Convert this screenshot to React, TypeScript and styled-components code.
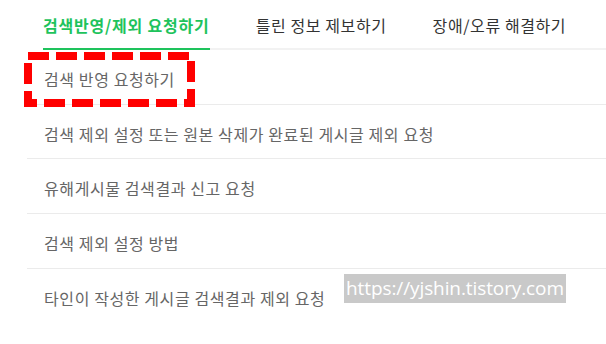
import styled, { createGlobalStyle } from "styled-components";

const GlobalStyle = createGlobalStyle`
  html, body {
    margin: 0;
    padding: 0;
    background: #fff;
  }
  body {
    font-family: "Noto Sans CJK KR", "Noto Sans", sans-serif;
  }
`;

const Page = styled.div`
  position: relative;
  width: 606px;
  height: 344px;
  overflow: hidden;
`;

const TabBar = styled.div`
  display: flex;
  gap: 46px;
  margin-left: 43px;
  height: 50px;
  box-sizing: border-box;
  border-bottom: 2px solid #f2f2f2;
`;

const Tab = styled.div<{ active?: boolean }>`
  display: flex;
  align-items: center;
  height: 50px;
  box-sizing: border-box;
  padding-top: 2px;
  margin-bottom: -2px;
  font-size: 16px;
  letter-spacing: ${p => (p.active ? 0.8 : 0.6)}px;
  font-weight: ${p => (p.active ? 700 : 400)};
  color: ${p => (p.active ? "#1ec35c" : "#333")};
  border-bottom: 2px solid ${p => (p.active ? "#1ec35c" : "transparent")};
  white-space: nowrap;
`;

const List = styled.ul`
  list-style: none;
  margin: 0 0 0 27px;
  padding: 0;
`;

const Row = styled.li`
  display: flex;
  align-items: center;
  height: 54.7px;
  box-sizing: border-box;
  padding: 4px 0 0 17px;
  border-bottom: 1px solid #ebebeb;
  font-size: 16px;
  letter-spacing: 0.6px;
  color: #666;
  white-space: nowrap;

  &:last-child {
    border-bottom: none;
  }
`;

const Marker = styled.svg`
  position: absolute;
  left: 24px;
  top: 52px;
`;

const Watermark = styled.div`
  position: absolute;
  left: 344px;
  top: 274px;
  width: 222px;
  height: 29px;
  background: #c9c9c9;
  color: #fff;
  font-family: "Open Sans", sans-serif;
  font-size: 19px;
  letter-spacing: -0.1px;
  line-height: 29px;
  text-align: center;
  white-space: nowrap;
`;

const tabs = ["검색반영/제외 요청하기", "틀린 정보 제보하기", "장애/오류 해결하기"];

const items = [
  "검색 반영 요청하기",
  "검색 제외 설정 또는 원본 삭제가 완료된 게시글 제외 요청",
  "유해게시물 검색결과 신고 요청",
  "검색 제외 설정 방법",
  "타인이 작성한 게시글 검색결과 제외 요청",
];

export default function App() {
  return (
    <Page>
      <GlobalStyle />
      <TabBar>
        {tabs.map((t, i) => (
          <Tab key={t} active={i === 0}>
            {t}
          </Tab>
        ))}
      </TabBar>
      <List>
        {items.map(item => (
          <Row key={item}>{item}</Row>
        ))}
      </List>
      <Marker width="171" height="55" viewBox="0 0 171 55">
        <rect
          x="4"
          y="4"
          width="163"
          height="47"
          fill="none"
          stroke="#ff0000"
          strokeWidth="8"
          strokeDasharray="21 7"
        />
      </Marker>
      <Watermark>https://yjshin.tistory.com</Watermark>
    </Page>
  );
}
